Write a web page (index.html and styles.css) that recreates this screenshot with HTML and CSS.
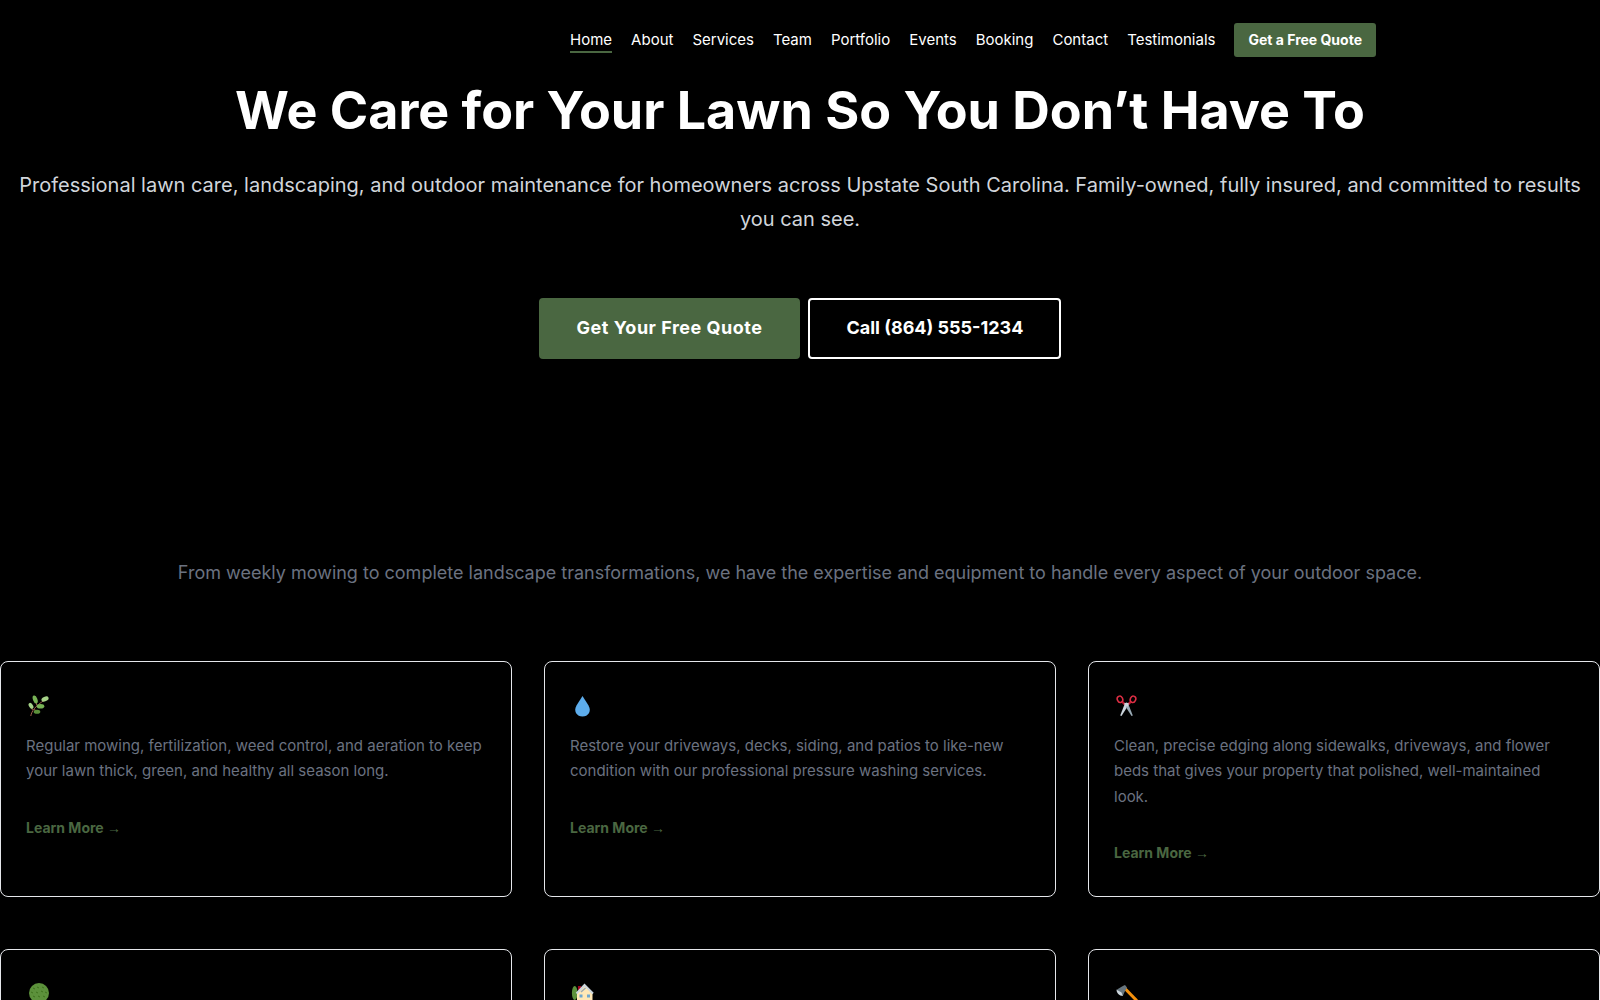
FILE: index.html
```html
<!DOCTYPE html>
<html lang="en">
<head>
  <meta charset="UTF-8" />
  <meta name="viewport" content="width=device-width, initial-scale=1.0"/>
  <title>Lawn Care &amp; Landscaping | Upstate South Carolina</title>
  <link rel="stylesheet" href="styles.css">
</head>
<body>
  <header class="site-header">
    <nav class="nav">
      <a class="nav-link active" href="#home">Home</a>
      <a class="nav-link" href="#about">About</a>
      <a class="nav-link" href="#services">Services</a>
      <a class="nav-link" href="#team">Team</a>
      <a class="nav-link" href="#portfolio">Portfolio</a>
      <a class="nav-link" href="#events">Events</a>
      <a class="nav-link" href="#booking">Booking</a>
      <a class="nav-link" href="#contact">Contact</a>
      <a class="nav-link" href="#testimonials">Testimonials</a>
      <a class="nav-cta" href="#quote">Get a Free Quote</a>
    </nav>
  </header>

  <section class="hero" id="home">
    <h1>We Care for Your Lawn So You Don’t Have To</h1>
    <p>Professional lawn care, landscaping, and outdoor maintenance for homeowners across Upstate South Carolina. Family-owned, fully insured, and committed to results you can see.</p>
    <div class="hero-actions">
      <a class="btn btn-primary" href="#quote">Get Your Free Quote</a>
      <a class="btn btn-outline" href="tel:+18645551234">Call (864) 555-1234</a>
    </div>
  </section>

  <section class="services" id="services">
    <p class="services-intro">From weekly mowing to complete landscape transformations, we have the expertise and equipment to handle every aspect of your outdoor space.</p>
    <div class="card-grid">
      <article class="card">
        <!-- herb -->
        <svg class="card-icon" viewBox="0 0 24 24" aria-hidden="true">
          <path d="M4.8 22C5.500 17 10 11.500 18 6.500M11 11.500L9.500 7M6.500 16L5 13M8 15.500L11 17" fill="none" stroke="#a0604c" stroke-width="1"/>
          <ellipse cx="9.200" cy="5.500" rx="2.200" ry="4.200" transform="rotate(-20 9.200 5.500)" fill="#77b255"/>
          <ellipse cx="19" cy="5" rx="3.800" ry="2.300" transform="rotate(-25 19 5)" fill="#a6d388"/>
          <ellipse cx="5" cy="11.800" rx="1.900" ry="3.200" transform="rotate(-35 5 11.800)" fill="#a6d388"/>
          <ellipse cx="14.500" cy="12.300" rx="3.800" ry="2.300" fill="#77b255"/>
          <ellipse cx="11" cy="17.700" rx="3.300" ry="2" fill="#5c913b"/>
        </svg>
        <p>Regular mowing, fertilization, weed control, and aeration to keep your lawn thick, green, and healthy all season long.</p>
        <a class="card-link" href="#lawn-care">Learn More <span class="arrow">→</span></a>
      </article>
      <article class="card">
        <!-- droplet -->
        <svg class="card-icon" viewBox="0 0 24 24" aria-hidden="true">
          <path d="M12.500 2L6.500 11.500C3 17.500 7 22.500 12.500 22.500S22 17.500 18.500 11.500Z" fill="#5dadec"/>
        </svg>
        <p>Restore your driveways, decks, siding, and patios to like-new condition with our professional pressure washing services.</p>
        <a class="card-link" href="#pressure-washing">Learn More <span class="arrow">→</span></a>
      </article>
      <article class="card">
        <!-- scissors -->
        <svg class="card-icon" viewBox="0 0 24 24" aria-hidden="true">
          <path d="M10.500 10.500L13.500 12.500L7.500 22L6.200 21.500Z" fill="#ccd6dd"/>
          <path d="M14.500 10.500L11.500 12.500L17.500 22L18.800 21.500Z" fill="#99aab5"/>
          <path d="M8.500 8L11 10.500M16.500 8L14 10.500" stroke="#be1931" stroke-width="2.400"/>
          <ellipse cx="6" cy="5.300" rx="2.700" ry="3.200" transform="rotate(-25 6 5.300)" fill="none" stroke="#dd2e44" stroke-width="1.500"/>
          <ellipse cx="19" cy="5.300" rx="2.700" ry="3.200" transform="rotate(25 19 5.300)" fill="none" stroke="#dd2e44" stroke-width="1.500"/>
          <path d="M10 9.500L12.500 8.500L15 9.500L14 12.500H11Z" fill="#ccd6dd"/>
        </svg>
        <p>Clean, precise edging along sidewalks, driveways, and flower beds that gives your property that polished, well-maintained look.</p>
        <a class="card-link" href="#edging">Learn More <span class="arrow">→</span></a>
      </article>
      <article class="card">
        <!-- tree -->
        <svg class="card-icon" viewBox="0 0 24 24" aria-hidden="true">
          <path d="M11.500 16H14.500V24H11.500Z" fill="#662113"/>
          <circle cx="13" cy="11" r="10" fill="#5c913b"/>
          <path d="M7 6l2 1M11 5l2 1M16 5l2 1M5 10l2 1M10 10l2 1M15 9l2 1M19 10l2 1M7 14l2 1M12 14l2 1M17 14l2 1" stroke="#3e721d" stroke-width="1"/>
        </svg>
      </article>
      <article class="card">
        <!-- house with garden -->
        <svg class="card-icon" viewBox="0 0 24 24" aria-hidden="true">
          <ellipse cx="4.700" cy="11" rx="2.800" ry="7" fill="#5c913b"/>
          <path d="M8 4H11V9H8Z" fill="#a0041e"/>
          <path d="M7 11L14.500 3.500L22.500 11V24H7Z" fill="#ffe8b6"/>
          <path d="M6.500 11.500L14.500 3L23 11.500" fill="none" stroke="#ccd6dd" stroke-width="2"/>
          <path d="M11 10L15.500 6" stroke="#99aab5" stroke-width="1.500"/>
          <path d="M9.500 12.500H12.500V15.500H9.500ZM17 12.500H20V15.500H17Z" fill="#6fa8d0"/>
        </svg>
      </article>
      <article class="card">
        <!-- axe -->
        <svg class="card-icon" viewBox="0 0 24 24" aria-hidden="true">
          <path d="M9 4.500L24 20" stroke="#f4900c" stroke-width="3"/>
          <path d="M8 4.500L11 3L13 5.500L10.500 10L9 13.500L3 7.500Z" fill="#66757f"/>
          <path d="M2.500 7.500C2.500 11 5 14 9 14L7.500 10.500Z" fill="#ccd6dd"/>
        </svg>
      </article>
    </div>
  </section>
</body>
</html>
```

FILE: styles.css
```css
* {
  margin: 0;
  padding: 0;
  box-sizing: border-box;
}

body {
  font-family: 'Inter', sans-serif;
  background: #000;
  color: #fff;
  line-height: 1.7;
  overflow-x: hidden;
}

a {
  text-decoration: none;
}

.site-header {
  max-width: 1200px;
  margin: 0 auto;
  padding: 23px 24px;
}

.nav {
  display: flex;
  justify-content: flex-end;
  align-items: center;
  gap: 19px;
}

.nav-link {
  color: #fff;
  font-size: 15px;
  line-height: 22px;
  padding-top: 2px;
  border-bottom: 2px solid transparent;
}

.nav-link.active {
  border-bottom-color: #4a6741;
}

.nav-cta {
  background: #4a6741;
  color: #fff;
  font-size: 14px;
  font-weight: 700;
  line-height: 18px;
  padding: 8px 14px;
  border-radius: 3px;
}

.hero {
  text-align: center;
}

.hero h1 {
  font-size: 52px;
  font-weight: 700;
  line-height: 62px;
  margin-bottom: 26px;
}

.hero p {
  color: #d1d5db;
  font-size: 20px;
  margin-bottom: 62px;
}

.hero-actions {
  display: flex;
  justify-content: center;
  gap: 8px;
}

.btn {
  font-size: 18px;
  font-weight: 700;
  line-height: 25px;
  padding: 15px 36px 17px;
  border: 2px solid #4a6741;
  border-radius: 4px;
}

.btn-primary {
  background: #4a6741;
  color: #fff;
  letter-spacing: 0.5px;
}

.btn-outline {
  color: #fff;
  border-color: #fff;
}

.services {
  padding-top: 199px;
}

.services-intro {
  color: #6b7280;
  font-size: 18px;
  text-align: center;
  margin-bottom: 72px;
}

.card-grid {
  display: grid;
  grid-template-columns: repeat(3, 1fr);
  gap: 52px 32px;
}

.card {
  min-height: 236px;
  padding: 32px 25px 30px;
  border: 1px solid #e5e7eb;
  border-radius: 8px;
}

.card-icon {
  display: block;
  width: 24px;
  height: 24px;
  margin-bottom: 15px;
}

.card p {
  color: #6b7280;
  font-size: 15px;
  margin-bottom: 32px;
}

.card-link {
  display: block;
  color: #4a6741;
  font-size: 14px;
  font-weight: 700;
  line-height: 24px;
}

.arrow {
  font-family: 'Liberation Sans', sans-serif;
  font-weight: 400;
}
```
